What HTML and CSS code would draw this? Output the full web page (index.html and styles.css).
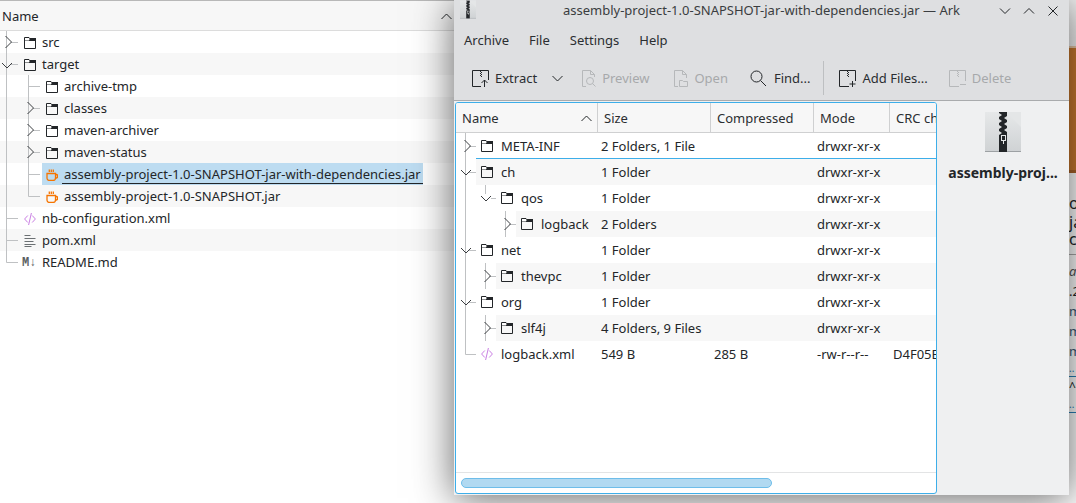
FILE: index.html
```html
<!DOCTYPE html>
<html lang="en">
<head>
<meta charset="utf-8">
<title>Ark</title>
<link rel="stylesheet" href="styles.css">
</head>
<body>
<svg class="defs" aria-hidden="true">
  <defs>
    <g id="folder"><path d="M.5 11.500V.5H5L6.500 2.500H11.500V11.500Z" fill="none" stroke="#232629"/><path d="M.5 3.500H5L6 1H12V4H.5Z" fill="#232629"/><path d="M1 1H4.800L5.300 2 4.600 3H1Z" fill="#fff"/></g>
    <g id="xml"><path d="M3.800 2.500 .6 6 3.800 9.500M8.200 2.500 11.400 6 8.200 9.500M7.400 0 4.600 12" fill="none" stroke="#c97fe3"/></g>
    <g id="lines"><path d="M.5 .5h6M.5 3.500h11M.5 6.500h9M.5 9.500h11M.5 11.500h7" fill="none" stroke="#6b7073"/></g>
    <g id="cup"><path d="M1 4.500h8.500v4.500a2.500 2.500 0 0 1-2.500 2.500H3.500A2.500 2.500 0 0 1 1 9ZM9.500 5.500h1a1.200 1.200 0 0 1 1 1.200v1a1.200 1.200 0 0 1-1 1.300h-1M3.300 3V.5M5.300 3V.5M7.300 3V.5" fill="none" stroke="#f67400" stroke-width="1.300"/></g>
    <path id="chev-up" d="M.5 6 5.500 1 10.500 6" fill="none" stroke="#232629"/>
    <path id="chev-down" d="M.5 1 5.500 6 10.500 1" fill="none" stroke="#232629"/>
    <path id="t22" d="M6.500 0V22M11 11.500H18" fill="none" class="guide"/>
    <path id="l22" d="M6.500 0V11.500H18" fill="none" class="guide"/>
    <path id="v22" d="M6.500 0V22" fill="none" class="guide"/>
    <path id="t22x" d="M6.500 0V22M6.500 11.500H18" fill="none" class="guide"/>
    <path id="t26" d="M9.500 0V26M13 13.500H20" fill="none" class="guide"/>
    <path id="l26" d="M9.500 0V13.500H20" fill="none" class="guide"/>
    <path id="v26" d="M9.500 0V26" fill="none" class="guide"/>
    <path id="cr22" d="M5.500 5 11.500 11 5.500 17" fill="none" class="tw"/>
    <path id="cd22" d="M2 10 7 15 12 10" fill="none" class="tw"/>
    <path id="cr26" d="M8.500 7 14.500 13 8.500 19" fill="none" class="tw"/>
    <path id="cd26" d="M5 11 10 16 15 11" fill="none" class="tw"/>
    <g id="zip">
      <rect width="36" height="40" fill="url(#zipbg)"/>
      <path d="M21 0 36 15V0Z" fill="#e4e6e7"/>
      <rect y="39" width="36" height="1" fill="#9da1a4"/>
      <rect x="14" width="8" height="40" fill="#232629"/>
      <path d="M14 1l3 2-3 2ZM14 7l3 2-3 2ZM14 13l3 2-3 2ZM14 19l3 2-3 2ZM22 4l-3 2 3 2ZM22 10l-3 2 3 2ZM22 16l-3 2 3 2Z" fill="#dfe1e2"/>
      <rect x="16.500" y="23.500" width="4" height="5" fill="none" stroke="#e4e6e7"/>
      <rect x="18" y="28" width="1" height="4" fill="#e4e6e7"/>
    </g>
    <linearGradient id="zipbg" x1="0" y1="0" x2="0" y2="1"><stop offset="0" stop-color="#e6e8e9"/><stop offset="1" stop-color="#cfd2d4"/></linearGradient>
  </defs>
</svg>

<main class="files">
  <header class="files-head"><span>Name</span><svg class="chev" viewBox="0 0 11 7"><use href="#chev-up"/></svg></header>
  <ul class="tree">
    <li class="row"><svg class="twig"><use href="#t22"/><use href="#cr22"/></svg><div class="item"><svg class="ico" viewBox="0 0 12 12"><use href="#folder"/></svg><span>src</span></div></li>
    <li class="row alt"><svg class="twig"><use href="#t22"/><use href="#cd22"/></svg><div class="item"><svg class="ico" viewBox="0 0 12 12"><use href="#folder"/></svg><span>target</span></div></li>
    <li class="row"><svg class="twig"><use href="#v22"/></svg><svg class="twig"><use href="#t22x"/></svg><div class="item"><svg class="ico" viewBox="0 0 12 12"><use href="#folder"/></svg><span>archive-tmp</span></div></li>
    <li class="row alt"><svg class="twig"><use href="#v22"/></svg><svg class="twig"><use href="#t22"/><use href="#cr22"/></svg><div class="item"><svg class="ico" viewBox="0 0 12 12"><use href="#folder"/></svg><span>classes</span></div></li>
    <li class="row"><svg class="twig"><use href="#v22"/></svg><svg class="twig"><use href="#t22"/><use href="#cr22"/></svg><div class="item"><svg class="ico" viewBox="0 0 12 12"><use href="#folder"/></svg><span>maven-archiver</span></div></li>
    <li class="row alt"><svg class="twig"><use href="#v22"/></svg><svg class="twig"><use href="#t22"/><use href="#cr22"/></svg><div class="item"><svg class="ico" viewBox="0 0 12 12"><use href="#folder"/></svg><span>maven-status</span></div></li>
    <li class="row"><svg class="twig"><use href="#v22"/></svg><svg class="twig"><use href="#t22x"/></svg><div class="item selected"><svg class="ico" viewBox="0 0 12 12"><use href="#cup"/></svg><span>assembly-project-1.0-SNAPSHOT-jar-with-dependencies.jar</span></div></li>
    <li class="row alt"><svg class="twig"><use href="#v22"/></svg><svg class="twig"><use href="#l22"/></svg><div class="item"><svg class="ico" viewBox="0 0 12 12"><use href="#cup"/></svg><span>assembly-project-1.0-SNAPSHOT.jar</span></div></li>
    <li class="row"><svg class="twig"><use href="#t22x"/></svg><div class="item"><svg class="ico" viewBox="0 0 12 12"><use href="#xml"/></svg><span>nb-configuration.xml</span></div></li>
    <li class="row alt"><svg class="twig"><use href="#t22x"/></svg><div class="item"><svg class="ico" viewBox="0 0 12 12"><use href="#lines"/></svg><span>pom.xml</span></div></li>
    <li class="row"><svg class="twig"><use href="#l22"/></svg><div class="item"><b class="md">M↓</b><span>README.md</span></div></li>
  </ul>
</main>

<aside class="behind">
  <div class="behind-top"></div>
  <div class="behind-banner"></div>
  <div class="behind-text">
    <p class="big">o</p>
    <p class="big">ja</p>
    <p class="big rule">c</p>
    <p class="ital">a</p>
    <p>.2</p>
    <p class="link">m</p>
    <p class="link">m</p>
    <p class="link">m</p>
    <p class="tiny">..</p>
    <p class="sym">^~</p>
    <p class="tiny">..</p>
  </div>
</aside>

<section class="ark">
  <header class="titlebar">
    <svg class="app-icon" viewBox="0 0 36 40"><use href="#zip"/></svg>
    <h1 class="title">assembly-project-1.0-SNAPSHOT-jar-with-dependencies.jar — Ark</h1>
    <div class="win-btns">
      <svg viewBox="0 0 12 12"><path d="M1 3.500 6 8.500 11 3.500" fill="none" stroke="#232629"/></svg>
      <svg viewBox="0 0 12 12"><path d="M1 8.500 6 3.500 11 8.500" fill="none" stroke="#232629"/></svg>
      <svg viewBox="0 0 12 12"><path d="M1.500 1.500 10.500 10.500M10.500 1.500 1.500 10.500" fill="none" stroke="#232629"/></svg>
    </div>
  </header>
  <nav class="menubar"><span>Archive</span><span>File</span><span>Settings</span><span>Help</span></nav>
  <div class="toolbar">
    <button class="tool t-extract"><svg viewBox="0 0 17 17"><path d="M.5.5H16.500V10M9 16.500H.5V.5" fill="none" stroke="#232629"/><path d="M8.500 1v1M9.500 2v1M8.500 3v1M9.500 4v1M8.500 5v1M9.500 6v1" stroke="#232629"/><path d="M12.500 17V10M9.500 13 12.500 10 15.500 13" fill="none" stroke="#232629"/></svg>Extract</button>
    <svg class="t-drop" viewBox="0 0 11 7"><use href="#chev-down"/></svg>
    <button class="tool off t-preview"><svg viewBox="0 0 17 17"><path d="M6 16.500H2.500V.5H10.500L14.500 4.500V7M10.500.5V4.500H14.500" fill="none" stroke="#b6b8ba"/><circle cx="10" cy="11" r="3.500" fill="none" stroke="#b6b8ba"/><path d="M12.500 13.500 15.500 16.500" stroke="#b6b8ba"/></svg>Preview</button>
    <button class="tool off t-open"><svg viewBox="0 0 17 17"><path d="M6 16.500H2.500V.5H10.500L14.500 4.500V8M10.500.5V4.500H14.500" fill="none" stroke="#b6b8ba"/><path d="M7.500 16.500V10.500H10.500L11.500 11.500H15.500V16.500Z" fill="none" stroke="#b6b8ba"/></svg>Open</button>
    <button class="tool t-find"><svg viewBox="0 0 17 17"><circle cx="6.500" cy="6.500" r="5.500" fill="none" stroke="#232629"/><path d="M10.500 10.500 16 16" stroke="#232629"/></svg>Find...</button>
    <i class="sep"></i>
    <button class="tool t-add"><svg viewBox="0 0 17 17"><path d="M.5.5H16.500V11M10 16.500H.5V.5" fill="none" stroke="#232629"/><path d="M8.500 1v1M9.500 2v1M8.500 3v1M9.500 4v1M8.500 5v1M9.500 6v1" stroke="#232629"/><path d="M13.500 11V17M10.500 14H16.500" stroke="#232629"/></svg>Add Files...</button>
    <button class="tool off t-del"><svg viewBox="0 0 17 17"><path d="M.5.5H16.500V11M10 16.500H.5V.5" fill="none" stroke="#b6b8ba"/><path d="M8.500 1v1M9.500 2v1M8.500 3v1M9.500 4v1M8.500 5v1M9.500 6v1" stroke="#b6b8ba"/><path d="M11 14.500H17" stroke="#b6b8ba"/></svg>Delete</button>
  </div>
  <div class="content">
    <div class="table-frame">
      <div class="thead">
        <div class="th th-name"><span>Name</span><svg class="chev" viewBox="0 0 11 7"><use href="#chev-up"/></svg></div>
        <div class="th">Size</div>
        <div class="th">Compressed</div>
        <div class="th">Mode</div>
        <div class="th">CRC checksum</div>
      </div>
      <div class="tbody">
        <div class="arow focus"><div class="aname"><svg class="atwig"><use href="#t26"/><use href="#cr26"/></svg><div class="alabel"><svg class="ico" viewBox="0 0 12 12"><use href="#folder"/></svg><span>META-INF</span></div></div><div>2 Folders, 1 File</div><div></div><div>drwxr-xr-x</div><div></div></div>
        <div class="arow alt"><div class="aname"><svg class="atwig"><use href="#t26"/><use href="#cd26"/></svg><div class="alabel"><svg class="ico" viewBox="0 0 12 12"><use href="#folder"/></svg><span>ch</span></div></div><div>1 Folder</div><div></div><div>drwxr-xr-x</div><div></div></div>
        <div class="arow"><div class="aname"><svg class="atwig"><use href="#v26"/></svg><svg class="atwig"><use href="#cd26"/><path d="M9.500 0V9M15 13.500H20" fill="none" class="guide"/></svg><div class="alabel"><svg class="ico" viewBox="0 0 12 12"><use href="#folder"/></svg><span>qos</span></div></div><div>1 Folder</div><div></div><div>drwxr-xr-x</div><div></div></div>
        <div class="arow alt"><div class="aname"><svg class="atwig"><use href="#v26"/></svg><svg class="atwig"></svg><svg class="atwig"><use href="#t26"/><use href="#cr26"/></svg><div class="alabel"><svg class="ico" viewBox="0 0 12 12"><use href="#folder"/></svg><span>logback</span></div></div><div>2 Folders</div><div></div><div>drwxr-xr-x</div><div></div></div>
        <div class="arow"><div class="aname"><svg class="atwig"><use href="#t26"/><use href="#cd26"/></svg><div class="alabel"><svg class="ico" viewBox="0 0 12 12"><use href="#folder"/></svg><span>net</span></div></div><div>1 Folder</div><div></div><div>drwxr-xr-x</div><div></div></div>
        <div class="arow alt"><div class="aname"><svg class="atwig"><use href="#v26"/></svg><svg class="atwig"><use href="#t26"/><use href="#cr26"/></svg><div class="alabel"><svg class="ico" viewBox="0 0 12 12"><use href="#folder"/></svg><span>thevpc</span></div></div><div>1 Folder</div><div></div><div>drwxr-xr-x</div><div></div></div>
        <div class="arow"><div class="aname"><svg class="atwig"><use href="#t26"/><use href="#cd26"/></svg><div class="alabel"><svg class="ico" viewBox="0 0 12 12"><use href="#folder"/></svg><span>org</span></div></div><div>1 Folder</div><div></div><div>drwxr-xr-x</div><div></div></div>
        <div class="arow alt"><div class="aname"><svg class="atwig"><use href="#v26"/></svg><svg class="atwig"><use href="#t26"/><use href="#cr26"/></svg><div class="alabel"><svg class="ico" viewBox="0 0 12 12"><use href="#folder"/></svg><span>slf4j</span></div></div><div>4 Folders, 9 Files</div><div></div><div>drwxr-xr-x</div><div></div></div>
        <div class="arow"><div class="aname"><svg class="atwig"><use href="#l26"/></svg><div class="alabel"><svg class="ico" viewBox="0 0 12 12"><use href="#xml"/></svg><span>logback.xml</span></div></div><div>549 B</div><div>285 B</div><div>-rw-r--r--</div><div>D4F05EA1</div></div>
      </div>
      <div class="hscroll"><div class="thumb"></div></div>
    </div>
    <aside class="details">
      <svg class="zip-big" viewBox="0 0 36 40"><use href="#zip"/></svg>
      <strong>assembly-proj...</strong>
    </aside>
  </div>
</section>
</body>
</html>
```
FILE: styles.css
```css
* { box-sizing: border-box; }
html, body { margin: 0; height: 100%; overflow: hidden; }
body {
  position: relative;
  width: 1076px;
  height: 503px;
  background: #fff;
  font: 13px/1 "Noto Sans", sans-serif;
  color: #232629;
}
.defs { position: absolute; width: 0; height: 0; }
.guide { stroke: #bfc1c3; }
.tw { stroke: #3a3d40; }
svg { display: block; flex: none; }

/* file tree behind */
.files { width: 1076px; }
.files-head {
  height: 31px;
  display: flex;
  align-items: center;
  justify-content: space-between;
  padding: 1px 624px 0 2px;
  background: #f7f7f7;
  border-top: 1px solid #b8b8b8;
  border-bottom: 1px solid #dcdcdc;
}
.chev { width: 11px; height: 7px; }
.tree { list-style: none; margin: 0; padding: 0; }
.row { display: flex; height: 22px; }
.row.alt { background: #f7f7f7; }
.twig { width: 22px; height: 22px; }
.item { display: flex; align-items: center; height: 22px; padding-left: 2px; gap: 6px; }
.ico { width: 12px; height: 12px; }
.item .ico { margin-top: 2px; }
.item.selected {
  margin-left: -2px;
  padding-left: 4px;
  background: #bddcf1;
  gap: 4px;
}
.item.selected span {
  line-height: 20px;
  height: 20px;
  padding: 0 2px;
  border-bottom: 1px solid #232629;
  margin-top: -1px;
}
.md {
  font: bold 12px/12px "Liberation Mono", monospace;
  color: #5a5e61;
  width: 16px;
  margin: 1px -2px 0 -2px;
  white-space: nowrap;
}

/* window at the far right */
.behind {
  position: absolute;
  left: 1060px;
  top: 0;
  width: 16px;
  height: 503px;
  overflow: hidden;
  background: #fff;
}
.behind-top { height: 48px; background: #f4f4f4; border-bottom: 2px solid #e8c8a8; }
.behind-banner { height: 125px; background: #c9792f; border-bottom: 3px solid #a9632a; }
.behind-text { padding: 21px 0 0 9px; white-space: nowrap; color: #232629; }
.behind-text p { margin: 0; height: 20px; font-size: 13px; line-height: 20px; }
.behind-text .big { font-size: 16px; height: 19px; line-height: 19px; }
.behind-text .rule { border-bottom: 1px solid #aaa; height: 23px; line-height: 14px; margin-bottom: 6px; }
.behind-text .ital { font-style: italic; color: #555; }
.behind-text .link { color: #3a5a78; }
.behind-text .tiny { font-size: 10px; color: #2980b9; height: 16px; line-height: 14px; border-bottom: 1px solid #2980b9; }
.behind-text .sym { font-size: 12px; height: 20px; }

/* Ark window */
.ark {
  position: absolute;
  left: 454px;
  top: 0;
  width: 615px;
  height: 495px;
  display: flex;
  flex-direction: column;
  background: #dedfe1;
  box-shadow: 0 3px 38px rgba(0, 0, 0, .62);
}
.titlebar { position: relative; height: 21px; display: flex; align-items: center; padding: 0 8px 0 6px; }
.app-icon { width: 16px; height: 19px; margin-top: -2px; }
.title { flex: 1; margin: 0; font: 13px/1 "Noto Sans", sans-serif; text-align: center; padding-left: 48px; color: #3a3d40; white-space: nowrap; }
.win-btns { display: flex; gap: 12px; margin-right: 2px; }
.win-btns svg { width: 12px; height: 12px; }
.menubar { display: flex; gap: 20px; padding: 13px 0 0 10px; height: 35px; color: #2b2e31; }
.toolbar {
  height: 45px;
  display: flex;
  align-items: center;
  padding-left: 18px;
  border-bottom: 1px solid #a9abad;
}
.tool { display: flex; align-items: center; gap: 7px; border: 0; padding: 0; background: none; font: inherit; color: #2b2e31; }
.tool svg { width: 17px; height: 17px; }
.tool.off { color: #a7a9ab; }
.t-extract { gap: 6px; }
.t-drop { width: 11px; height: 7px; margin: 0 17px 0 15px; }
.t-preview { margin-right: 23px; gap: 5px; }
.t-open { margin-right: 22px; gap: 5px; }
.sep { width: 1px; height: 34px; background: #bdbfc1; margin: 0 15px 0 12px; }
.t-add { margin-right: 21px; gap: 7px; }
.t-del { gap: 6px; }

.content { flex: 1; display: flex; background: #eff0f1; padding: 1px 0 0 1px; min-height: 0; }
.table-frame {
  width: 482px;
  height: 392px;
  display: flex;
  flex-direction: column;
  background: #fff;
  border: 1px solid #3daee9;
  border-radius: 3px;
  overflow: hidden;
}
.thead, .arow { display: grid; grid-template-columns: 142px 113px 103px 76px 60px; white-space: nowrap; }
.thead { height: 30px; flex: none; background: #f7f7f7; border-bottom: 1px solid #cfd0d1; }
.th { display: flex; align-items: center; justify-content: space-between; padding: 1px 5px 0 6px; border-right: 1px solid #cfd0d1; color: #2b2e31; overflow: hidden; }
.th:last-child { border-right: 0; justify-content: flex-start; }
.th-name { padding-left: 6px; }
.tbody { flex: 1; overflow: hidden; }
.arow { height: 26px; line-height: 26px; }
.arow > div { padding-left: 3px; overflow: hidden; }
.arow > .aname { display: flex; padding-left: 0; }
.atwig { width: 20px; height: 26px; }
.alabel { flex: 1; display: flex; align-items: center; gap: 8px; padding-left: 5px; }
.arow.alt > div:not(.aname), .arow.alt .alabel { background: #f7f7f7; }
.arow.focus > div:not(.aname), .arow.focus .alabel { box-shadow: inset 0 -1px 0 #3daee9; }
.hscroll { height: 21px; flex: none; border-top: 1px solid #e3e4e5; padding: 5px 0 0 5px; }
.thumb { width: 311px; height: 10px; background: #b1d9f1; border: 1px solid #6ebde9; border-radius: 5px; }
.details { flex: 1; display: flex; flex-direction: column; align-items: center; padding-top: 10px; }
.zip-big { width: 36px; height: 40px; }
.details strong { margin-top: 13px; font-size: 14px; line-height: 16px; font-weight: 700; white-space: nowrap; }
```
